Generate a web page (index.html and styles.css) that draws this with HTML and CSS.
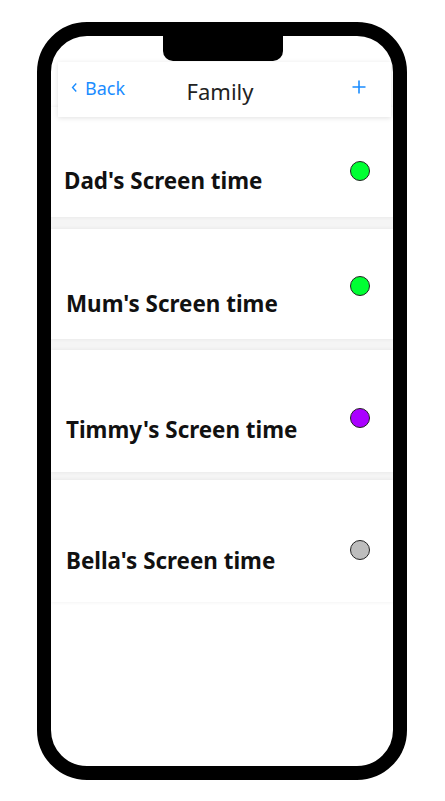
FILE: index.html
```html
<!DOCTYPE html>
<html>
<head>
<meta charset="utf-8">
<link rel="stylesheet" href="styles.css">
</head>
<body>
<div class="phone">
  <div class="notch"></div>
  <div class="screen">
    <header class="topbar">
      <span class="back"><svg class="chev" viewBox="0 0 8 12" width="7" height="11"><path d="M6 1.5 L1.8 6 L6 10.5" fill="none" stroke="#1a8cff" stroke-width="1.6"/></svg>Back</span>
      <span class="title">Family</span>
      <svg class="plus" viewBox="0 0 14 14" width="14" height="14"><path d="M7 0.5 V13.5 M0.5 7 H13.5" stroke="#1a8cff" stroke-width="1.6" fill="none"/></svg>
    </header>
    <div class="list">
      <div class="card card-dad">
        <span class="name">Dad's Screen time</span>
        <span class="dot dot-green"></span>
      </div>
      <div class="card card-mum">
        <span class="name">Mum's Screen time</span>
        <span class="dot dot-green"></span>
      </div>
      <div class="card card-timmy">
        <span class="name">Timmy's Screen time</span>
        <span class="dot dot-purple"></span>
      </div>
      <div class="card card-bella">
        <span class="name">Bella's Screen time</span>
        <span class="dot dot-grey"></span>
      </div>
    </div>
  </div>
</div>
</body>
</html>
```

FILE: styles.css
```css
html, body {
  margin: 0;
  padding: 0;
  background: #fff;
}
body {
  font-family: "Noto Sans", "Open Sans", sans-serif;
  width: 445px;
  height: 801px;
  overflow: hidden;
}
.phone {
  position: relative;
  box-sizing: border-box;
  margin: 22px 0 0 37px;
  width: 370px;
  height: 758px;
  border: 14px solid #000;
  border-radius: 50px;
  overflow: hidden;
  background: #fff;
}
.notch {
  position: absolute;
  top: 0;
  left: 112px;
  width: 120px;
  height: 25px;
  background: #000;
  border-radius: 0 0 10px 10px;
  z-index: 5;
}
.screen {
  display: flex;
  flex-direction: column;
  padding-top: 26px;
}
.topbar {
  position: relative;
  z-index: 2;
  box-sizing: border-box;
  height: 55px;
  margin: 0 2px 0 7px;
  background: #fff;
  box-shadow: 0 1px 5px rgba(0,0,0,0.12);
  display: flex;
  align-items: flex-start;
  padding: 0 25px 0 13px;
}
.back {
  color: #1a8cff;
  font-size: 18px;
  line-height: 24px;
  margin-top: 14px;
  display: flex;
  align-items: center;
  gap: 7px;
}
.chev {
  margin-top: -2px;
}
.title {
  flex: 1;
  text-align: center;
  font-size: 22px;
  line-height: 28px;
  color: #222;
  margin-top: 15px;
  margin-right: 37px;
}
.plus {
  margin-top: 18px;
}
.list {
  display: flex;
  flex-direction: column;
  margin-top: -10px;
  background: #f5f5f5;
}
.card {
  position: relative;
  box-sizing: border-box;
  background: #fff;
  box-shadow: 0 0 4px rgba(0,0,0,0.07);
  display: flex;
  align-items: flex-start;
  justify-content: space-between;
  padding: 0 23px 0 15px;
}
.card-dad { height: 110px; --t: 60px; --d: 54px; padding-left: 13px; }
.card-mum { height: 110px; --t: 61px; --d: 47px; margin-top: 12px; }
.card-timmy { height: 122px; --t: 66px; --d: 58px; margin-top: 11px; }
.card-bella { height: 122px; --t: 67px; --d: 60px; margin-top: 8px; }
.name {
  margin-top: var(--t);
  font-size: 22.4px;
  line-height: 28px;
  font-weight: 700;
  color: #111;
}
.dot {
  margin-top: var(--d);
  width: 18px;
  height: 18px;
  border: 1px solid #222;
  border-radius: 50%;
}
.dot-green { background: #00ff33; }
.dot-purple { background: #aa00ff; }
.dot-grey { background: #bdbdbd; }
```
